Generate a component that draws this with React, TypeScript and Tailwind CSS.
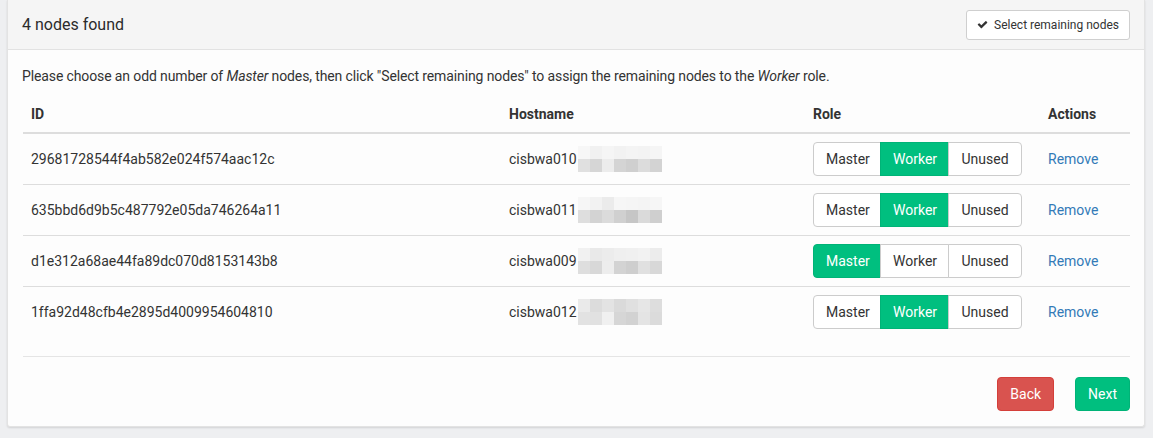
import { useState } from "react";

type Role = "Master" | "Worker" | "Unused";

interface NodeRow {
  id: string;
  hostname: string;
  role: Role;
  blur: string[];
}

const initialNodes: NodeRow[] = [
  {
    id: "29681728544f4ab582e024f574aac12c",
    hostname: "cisbwa010",
    role: "Worker",
    blur: ["#f7f7f7", "#f1f1f1", "#f5f5f5", "#f2f2f2", "#f4f4f4", "#f3f3f3", "#f5f5f5", "#e0e0e0", "#d6d6d6", "#ececec", "#d4d4d4", "#cfcfcf", "#dcdcdc", "#d3d3d3"],
  },
  {
    id: "635bbd6d9b5c487792e05da746264a11",
    hostname: "cisbwa011",
    role: "Worker",
    blur: ["#f6f6f6", "#f2f2f2", "#ebebeb", "#f6f6f6", "#f5f5f5", "#f4f4f4", "#f6f6f6", "#dedede", "#d3d3d3", "#dbdbdb", "#d0d0d0", "#c6c6c6", "#dadada", "#cfcfcf"],
  },
  {
    id: "d1e312a68ae44fa89dc070d8153143b8",
    hostname: "cisbwa009",
    role: "Master",
    blur: ["#f1f1f1", "#e9e9e9", "#ececec", "#efefef", "#f0f0f0", "#f2f2f2", "#ececec", "#dedede", "#d8d8d8", "#ededed", "#d3d3d3", "#cecece", "#e0e0e0", "#d8d8d8"],
  },
  {
    id: "1ffa92d48cfb4e2895d4009954604810",
    hostname: "cisbwa012",
    role: "Worker",
    blur: ["#eaeaea", "#dcdcdc", "#e3e3e3", "#dadada", "#e0e0e0", "#e6e6e6", "#dddddd", "#e2e2e2", "#e1e1e1", "#f0f0f0", "#d6d6d6", "#d2d2d2", "#e4e4e4", "#dbdbdb"],
  },
];

function Blurred({ shades }: { shades: string[] }) {
  // pixelated hostname suffix (redacted)
  return (
    <div className="grid grid-cols-[repeat(7,12px)] grid-rows-[13px_13px] ml-[1px]">
      {shades.map((c, i) => (
        <div key={i} style={{ backgroundColor: c }} />
      ))}
    </div>
  );
}

export default function App() {
  const [nodes, setNodes] = useState(initialNodes);
  const roles: Role[] = ["Master", "Worker", "Unused"];

  const setRole = (id: string, role: Role) =>
    setNodes((prev) => prev.map((n) => (n.id === id ? { ...n, role } : n)));

  return (
    <div
      className="min-h-screen bg-[#eeeff1] pl-[7px] pr-[8px] pb-[12px] text-[14px] text-[#333]"
      style={{ fontFamily: "Roboto, 'Liberation Sans', sans-serif" }}
    >
      <div className="bg-[#fdfdfd] rounded-b-[3px] shadow-[0_1px_2px_rgba(0,0,0,0.12)] border-x border-b border-[#e3e3e3]">
        {/* Header */}
        <div className="h-[50px] bg-[#f5f5f5] border-b border-[#e2e2e2] flex items-center justify-between px-[14px]">
          <h3 className="text-[16px] font-normal text-[#2b2b2b]">4 nodes found</h3>
          <button className="h-[30px] flex items-center gap-[6px] px-[10px] bg-white border border-[#cfcfcf] rounded-[3px] text-[12px] text-[#333]">
            <svg className="w-[11px] h-[11px]" viewBox="0 0 1792 1792" fill="currentColor">
              <path d="M1671 566q0 40-28 68l-724 724-136 136q-28 28-68 28t-68-28l-136-136-362-362q-28-28-28-68t28-68l136-136q28-28 68-28t68 28l294 295 656-657q28-28 68-28t68 28l136 136q28 28 28 68z" />
            </svg>
            Select remaining nodes
          </button>
        </div>

        {/* Body */}
        <div className="pl-[15px] pr-[14px] pt-[16px] pb-[15px]">
          <p className="leading-[20px] mb-[10px] tracking-[-0.12px] -ml-[1px]">
            Please choose an odd number of <em>Master</em> nodes, then click "Select remaining nodes" to assign the
            remaining nodes to the <em>Worker</em> role.
          </p>

          <table className="w-full border-collapse">
            <thead>
              <tr className="border-b-2 border-[#dddddd] text-left">
                <th className="w-[478px] px-[8px] py-[8px] leading-[20px] font-bold">ID</th>
                <th className="w-[304px] px-[8px] py-[8px] leading-[20px] font-bold">Hostname</th>
                <th className="w-[235px] px-[8px] py-[8px] leading-[20px] font-bold">Role</th>
                <th className="px-[8px] py-[8px] leading-[20px] font-bold">Actions</th>
              </tr>
            </thead>
            <tbody>
              {nodes.map((n, i) => (
                <tr key={n.id} className={i < nodes.length - 1 ? "border-b border-[#dddddd]" : ""}>
                  <td className="px-[8px] py-[8px] leading-[20px]">{n.id}</td>
                  <td className="px-[8px] py-[8px]">
                    <div className="flex items-center">
                      <span className="leading-[20px]">{n.hostname}</span>
                      <Blurred shades={n.blur} />
                    </div>
                  </td>
                  <td className="px-[8px] py-[8px]">
                    <div className="inline-flex h-[34px]">
                      {roles.map((r, j) => {
                        const active = n.role === r;
                        return (
                          <button
                            key={r}
                            onClick={() => setRole(n.id, r)}
                            className={
                              (active
                                ? "bg-[#00bf7f] border-[#00b377] text-white "
                                : "bg-white border-[#cccccc] text-[#333] ") +
                              "border px-[12px] text-[14px] -ml-[1px] first:ml-0 " +
                              (j === 0 ? "rounded-l-[4px] w-[68px] " : "") +
                              (j === 1 ? "w-[69px] " : "") +
                              (j === 2 ? "rounded-r-[4px] w-[74px]" : "")
                            }
                          >
                            {r}
                          </button>
                        );
                      })}
                    </div>
                  </td>
                  <td className="px-[8px] py-[8px] leading-[20px]">
                    <a href="#" className="text-[#337ab7]">
                      Remove
                    </a>
                  </td>
                </tr>
              ))}
            </tbody>
          </table>

          <div className="mt-[19px] border-t border-[#e5e5e5] pt-[20px] flex justify-end gap-[21px]">
            <button className="h-[34px] px-[12px] rounded-[4px] bg-[#d9534f] border border-[#d43f3a] text-white text-[14px]">
              Back
            </button>
            <button className="h-[34px] px-[12px] rounded-[4px] bg-[#00bf7f] border border-[#00b377] text-white text-[14px]">
              Next
            </button>
          </div>
        </div>
      </div>
    </div>
  );
}
